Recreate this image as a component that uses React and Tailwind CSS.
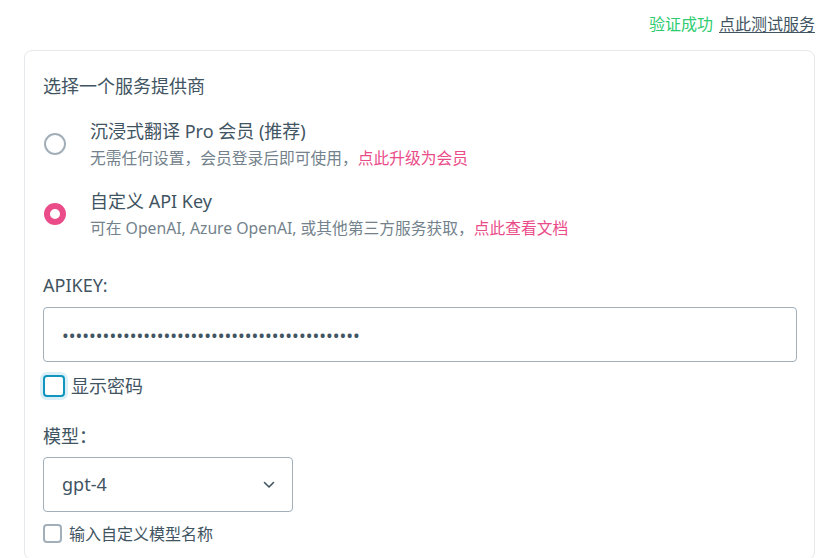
import React from 'react';

const font = { fontFamily: '"Noto Sans", "Noto Sans CJK SC", sans-serif' };

function Radio({ checked }) {
  return checked ? (
    <span className="w-[22px] h-[22px] rounded-full border-[6px] border-[#ea4c89] bg-white shrink-0" />
  ) : (
    <span className="w-[22px] h-[22px] rounded-full border-2 border-[#a2afb9] bg-white shrink-0" />
  );
}

function Option({ checked, title, desc, link }) {
  return (
    <div className="flex items-center">
      <div className="w-[47px] flex pl-[1px]">
        <Radio checked={checked} />
      </div>
      <div>
        <div className="text-[18px] leading-[24px] text-[#415462]">{title}</div>
        <div className="text-[15.75px] leading-[22px] mt-[4px] text-[#73828c]">
          {desc}
          <span className="text-[#ea4c89]">{link}</span>
        </div>
      </div>
    </div>
  );
}

export default function App() {
  return (
    <div className="min-h-[558px] bg-white pl-[24px] pr-[15px]" style={font}>
      <div className="h-[50px] flex items-start justify-end pt-[13px] text-[16px] leading-[22px]">
        <span className="text-[#2ecc71]">验证成功</span>
        <span className="ml-[6px] text-[#415462] underline underline-offset-2">点此测试服务</span>
      </div>
      <div className="border border-[#e6e9ec] rounded-[8px] pl-[18px] pr-[17px] pt-[23px] pb-[16px]">
        <div className="text-[18px] leading-[24px] text-[#415462]">选择一个服务提供商</div>
        <div className="mt-[21px]">
          <Option
            title="沉浸式翻译 Pro 会员 (推荐)"
            desc="无需任何设置，会员登录后即可使用，"
            link="点此升级为会员"
          />
        </div>
        <div className="mt-[20px]">
          <Option
            checked
            title="自定义 API Key"
            desc="可在 OpenAI, Azure OpenAI, 或其他第三方服务获取，"
            link="点此查看文档"
          />
        </div>
        <div className="mt-[34px] text-[18px] leading-[24px] text-[#415462]">APIKEY:</div>
        <input
          type="password"
          readOnly
          value="sk-abcdefghijklmnopqrstuvwxyz0123456789abcde"
          className="mt-[10px] block w-full h-[55px] px-[18px] border border-[#a2afb9] rounded-[4px] text-[#415462] text-[18px] outline-none"
        />
        <label className="mt-[13px] flex items-center h-[22px]">
          <span className="w-[22px] h-[22px] rounded-[4px] border-2 border-[#1095c1] bg-white shadow-[0_0_0_3px_rgba(16,149,193,0.15)]" />
          <span className="ml-[6px] text-[18px] leading-[24px] text-[#415462]">显示密码</span>
        </label>
        <div className="mt-[27px] text-[18px] leading-[24px] text-[#415462]">模型：</div>
        <div className="mt-[9px] w-[250px] h-[55px] border border-[#a2afb9] rounded-[4px] flex items-center justify-between pl-[18px] pr-[17px]">
          <span className="text-[18px] text-[#415462]">gpt-4</span>
          <svg width="12" height="8" viewBox="0 0 12 8" fill="none">
            <path d="M1.5 1.5 L6 6 L10.5 1.5" stroke="#415462" strokeWidth="1.6" strokeLinecap="round" strokeLinejoin="round" />
          </svg>
        </div>
        <label className="mt-[12px] flex items-center h-[19px]">
          <span className="w-[19px] h-[19px] rounded-[4px] border-2 border-[#a2afb9] bg-white" />
          <span className="ml-[7px] text-[16px] leading-[20px] text-[#415462]">输入自定义模型名称</span>
        </label>
      </div>
    </div>
  );
}
